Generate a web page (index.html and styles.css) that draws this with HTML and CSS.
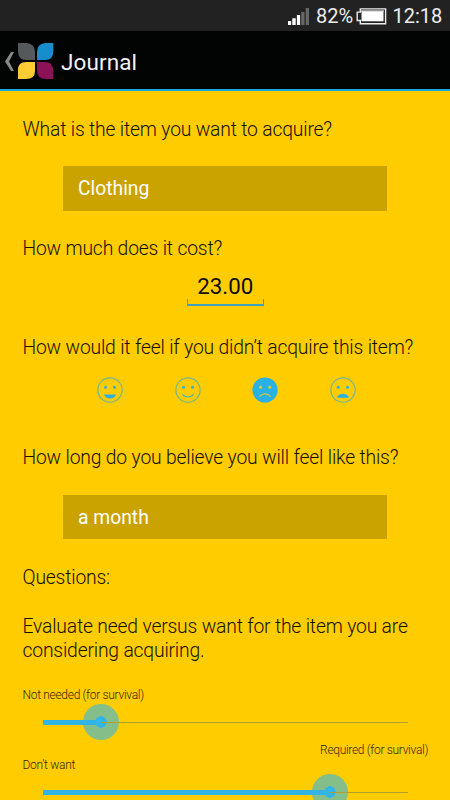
FILE: index.html
```html
<!DOCTYPE html>
<html lang="en">
<head>
<meta charset="utf-8">
<title>Journal</title>
<link rel="stylesheet" href="styles.css">
</head>
<body>
<div class="screen">
  <div class="status">
    <svg class="signal" width="22" height="18" viewBox="0 0 22 18"><path fill="#fff" d="M0 13h3.2v4H0zM4.3 10.3h3.4V17H4.3zM8.9 7h3.2v10H8.9z"/><path fill="#666" d="M13.2 4h3.3v13h-3.3zM17.7 0H21v17h-3.3z"/></svg>
    <span class="percent">82%</span>
    <svg class="battery" width="31" height="17" viewBox="0 0 31 17"><path d="M4.3.9h25.3v14.8H4.3v-3.2H1.2V4.1h3.1z" fill="#222" stroke="#eee" stroke-width="1.4"/><path fill="#999" d="M5 2h23v2H5z"/><path fill="#fff" d="M5.5 3.3h22v10h-22z"/></svg>
    <span class="clock">12:18</span>
  </div>
  <header class="bar">
    <svg class="back" width="9" height="19" viewBox="0 0 9 19"><path d="M6 0h3L4 9.5 9 19H6L0 9.5z" fill="#888"/></svg>
    <svg class="logo" width="36" height="36" viewBox="0 0 36 36"><path fill="#55595b" d="M0 0h9q8 1 8 9v8H8Q0 17 0 8z"/><path fill="#178dcc" d="M35.3 0v8q0 9-8 9H19V9q0-8 8-9z"/><path fill="#fc3" d="M17 19v9q0 8-9 8H0v-9q0-8 8-8z"/><path fill="#8c1257" d="M19 19h8q8 0 8.3 9v8H28q-9 0-9-9z"/></svg>
    <h1 class="title">Journal</h1>
  </header>
  <main class="form">
    <p class="q q-item">What is the item you want to acquire?</p>
    <div class="field">Clothing</div>
    <p class="q q-cost">How much does it cost?</p>
    <div class="price">23.00</div>
    <p class="q q-feel">How would it feel if you didn’t acquire this item?</p>
    <div class="moods">
      <svg width="26" height="26" viewBox="0 0 26 26"><circle class="ring" cx="13" cy="13" r="12.1"/><circle class="ink" cx="8.5" cy="10.2" r="1.5"/><circle class="ink" cx="17.5" cy="10.2" r="1.5"/><path class="ink" d="M7 17.5h12q-1.5 4-6 4t-6-4z"/></svg>
      <svg width="26" height="26" viewBox="0 0 26 26"><circle class="ring" cx="13" cy="13" r="12.1"/><circle class="ink" cx="8.5" cy="10.2" r="1.5"/><circle class="ink" cx="17.5" cy="10.2" r="1.5"/><path class="line" d="M7.3 17.5q5.7 5 11.4 0"/></svg>
      <svg width="26" height="26" viewBox="0 0 26 26"><circle class="ink" cx="13" cy="13" r="12.6"/><circle class="hole" cx="8.5" cy="10.2" r="1.6"/><circle class="hole" cx="17.8" cy="10.2" r="1.6"/><path class="cut" d="M7.3 19.6q5.7-5.4 11.4 0"/></svg>
      <svg width="26" height="26" viewBox="0 0 26 26"><circle class="ring" cx="13" cy="13" r="12.1"/><circle class="ink" cx="8.2" cy="10.2" r="1.5"/><circle class="ink" cx="17.5" cy="10.2" r="1.5"/><path class="ink" d="M7 20.8q1.5-4 6-4t6 4z"/></svg>
    </div>
    <p class="q q-long">How long do you believe you will feel like this?</p>
    <div class="field">a month</div>
    <p class="q q-head">Questions:</p>
    <p class="q q-eval">Evaluate need versus want for the item you are<br>considering acquiring.</p>
    <p class="low">Not needed (for survival)</p>
    <div class="slider"><div class="fill need"></div><div class="thumb"></div><div class="track"></div></div>
    <p class="high">Required (for survival)</p>
    <p class="low second">Don’t want</p>
    <div class="slider"><div class="fill want"></div><div class="thumb"></div><div class="track"></div></div>
  </main>
</div>
</body>
</html>
```
FILE: styles.css
```css
* { box-sizing: border-box; margin: 0; padding: 0; }
body { background: #ffcc00; font-family: Roboto, sans-serif; overflow: hidden; }
svg { display: block; flex: none; }
.screen { width: 450px; height: 800px; overflow: hidden; background: #ffcc00; }
.status { height: 31px; background: #222; display: flex; align-items: flex-start; padding: 8px 0 0 288px; color: #eee; font-size: 20px; line-height: 17px; white-space: nowrap; }
.percent { width: 37px; margin-left: 6px; }
.battery { margin-left: 3px; }
.clock { margin-left: 5.5px; }
.bar { height: 60px; background: #020303; border-bottom: 2px solid #16a8e4; display: flex; padding: 12px 0 0 5px; }
.back { margin-top: 9px; }
.logo { margin-left: 4px; }
.title { margin: 5px 0 0 7px; color: #f2f2f2; font-size: 22.5px; font-weight: 400; line-height: 28px; letter-spacing: 0.1px; }
.form { padding: 27px 22px 0 22.5px; }
.q { color: #140f00; font-size: 19.3px; line-height: 24px; font-weight: 300; white-space: nowrap; letter-spacing: -0.17px; }
.field { margin: 24px 41px 26.5px 40.5px; height: 44.5px; padding-left: 15px; background: #cba300; color: #fff; font-size: 19.3px; line-height: 45px; }
.price { position: relative; width: 77px; height: 35px; margin: 10px auto 0; text-align: center; font-size: 22.3px; line-height: 31px; color: #110c00; }
.price::after { content: ""; position: absolute; left: 0; right: 0; bottom: 0; height: 5px; border: 1px solid #3a9fc0; border-width: 0 1px 2px; }
.q-feel { margin-top: 30px; }
.moods { display: flex; gap: 51.5px; padding: 17px 0 0 74.5px; }
.ink { fill: #29b1e3; }
.ring { fill: none; stroke: #79b68b; stroke-width: 1.2; }
.line { fill: none; stroke: #4db3b8; stroke-width: 1.2; }
.hole { fill: #d8c83a; }
.cut { fill: none; stroke: #d8c83a; stroke-width: 1.3; }
.q-long { margin-top: 43px; }
.q-long + .field { margin-top: 25px; height: 44px; }
.q-eval { margin-top: 25px; line-height: 24.5px; }
.low, .high { color: #332900; font-size: 12px; line-height: 14px; font-weight: 300; letter-spacing: -0.31px; }
.low { margin-top: 24.5px; }
.high { margin-top: 1px; text-align: right; }
.low.second { margin-top: 1px; }
.slider { display: flex; align-items: center; height: 40px; margin: 0 20px 0 20.5px; }
.fill { height: 5px; background: #2fb4e5; }
.need { width: 58px; }
.want { width: 287px; }
.thumb { width: 36px; height: 36px; margin: 0 -18px; border-radius: 50%; background: radial-gradient(circle, #33b5e5 5.5px, #33b5e599 6px); flex: none; }
.track { flex: 1; height: 1px; background: #b39f2e; }
```
